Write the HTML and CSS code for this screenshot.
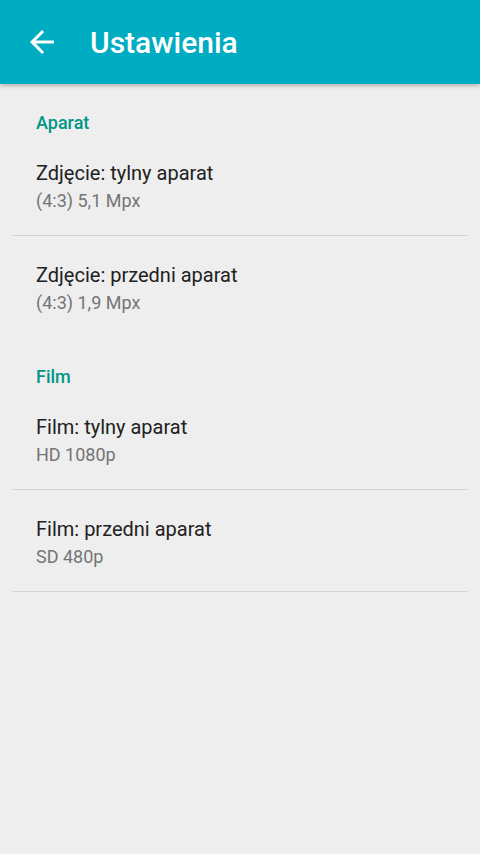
FILE: index.html
```html
<!DOCTYPE html>
<html lang="pl">
<head>
  <meta charset="UTF-8">
  <meta name="viewport" content="width=device-width, initial-scale=1.0">
  <title>Ustawienia</title>
  <link rel="stylesheet" href="styles.css">
</head>
<body>
  <header class="toolbar">
    <svg class="back" viewBox="0 0 24 24" aria-hidden="true">
      <path d="M20 11H7.83l5.59-5.59L12 4l-8 8 8 8 1.41-1.41L7.83 13H20v-2z"/>
    </svg>
    <h1>Ustawienia</h1>
  </header>

  <main class="prefs">
    <section class="section">
      <h2 class="section-title">Aparat</h2>
      <div class="item">
        <div class="item-title">Zdjęcie: tylny aparat</div>
        <div class="item-summary">(4:3) 5,1 Mpx</div>
      </div>
      <div class="item">
        <div class="item-title">Zdjęcie: przedni aparat</div>
        <div class="item-summary">(4:3) 1,9 Mpx</div>
      </div>
    </section>

    <section class="section">
      <h2 class="section-title">Film</h2>
      <div class="item">
        <div class="item-title">Film: tylny aparat</div>
        <div class="item-summary">HD 1080p</div>
      </div>
      <div class="item last">
        <div class="item-title">Film: przedni aparat</div>
        <div class="item-summary">SD 480p</div>
      </div>
    </section>
  </main>
</body>
</html>
```

FILE: styles.css
```css
body {
  margin: 0;
  background-color: #eeeeee;
  font-family: Roboto, "Noto Sans", sans-serif;
  min-height: 854px;
}
.toolbar {
  height: 84px;
  background-color: #00acc1;
  display: flex;
  align-items: center;
  padding-left: 24px;
  gap: 30px;
  box-shadow: 0 2px 4px rgba(0,0,0,0.25);
  position: relative;
}
.back {
  width: 36px;
  height: 36px;
  fill: #ffffff;
}
.toolbar h1 {
  margin: 0;
  color: #ffffff;
  font-size: 30px;
  font-weight: 500;
}
.prefs {
  padding: 0 12px;
}
.section + .section {
  margin-top: 1px;
}
.section-title {
  margin: 0;
  padding: 29px 24px 1px;
  font-size: 18px;
  line-height: 20px;
  font-weight: 500;
  color: #009688;
}
.item {
  padding: 26px 24px 20px;
  border-bottom: 1px solid #d4d4d4;
}
.section .item:last-child {
  border-bottom: none;
}
.section .item.last {
  border-bottom: 1px solid #d4d4d4;
}
.item-title {
  font-size: 20px;
  line-height: 26px;
  color: #212121;
}
.item-summary {
  font-size: 18px;
  line-height: 29px;
  color: #757575;
}
```
